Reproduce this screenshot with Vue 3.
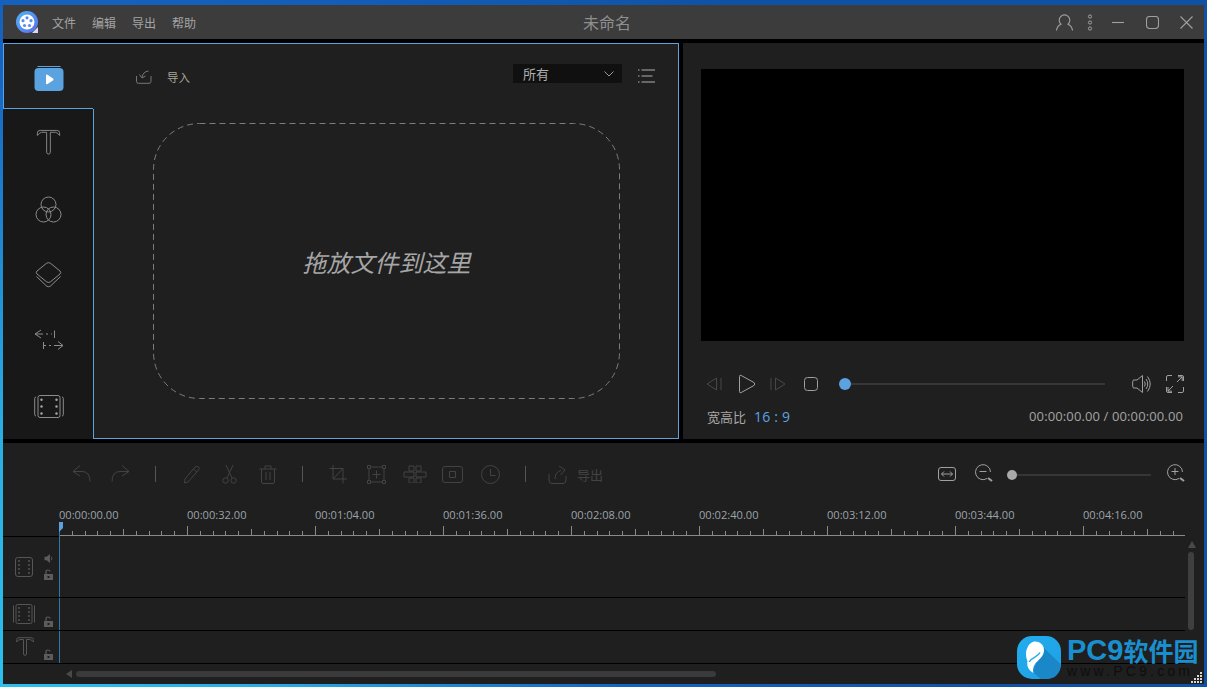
<script setup>
const menus = ['文件', '编辑', '导出', '帮助']

const toolbar = [
  { gap: 69, w: 20, h: 20, d: 'M8 1.5 L1 7.5 L8 12 M1 7.5 H10 Q18 7.5 18 17.5' },
  { gap: 18, w: 20, h: 20, d: 'M12 1.5 L19 7.5 L12 12 M19 7.5 H10 Q2 7.5 2 17.5' },
  { gap: 25, sep: true },
  { gap: 27, w: 17, h: 20, d: 'M2 15 L12 3 Q14 1.5 15.5 3 Q17 4.5 15.5 6 L5 18 L1.5 19 Z M10.5 5 L14 8' },
  { gap: 22, w: 15, h: 20, d: 'M5 14 L11 1 M10 14 L4 1 M6.2 16.5 A2.7 2.7 0 1 1 0.8 16.5 A2.7 2.7 0 1 1 6.2 16.5 M14.2 16.5 A2.7 2.7 0 1 1 8.8 16.5 A2.7 2.7 0 1 1 14.2 16.5' },
  { gap: 22, w: 18, h: 20, d: 'M0.5 5 H17.5 M6 5 V2 H12 V5 M2.5 5 V18 Q2.5 19.5 4 19.5 H14 Q15.5 19.5 15.5 18 V5 M7 8 V16 M11 8 V16' },
  { gap: 25, sep: true },
  { gap: 26, w: 18, h: 20, d: 'M4 1 V15 H18 M0.5 4.5 H14 V19.5 M4 15 L14 4.5' },
  { gap: 20, w: 19, h: 19, d: 'M4 2 H15 M4 17 H15 M2 4 V15 M17 4 V15 M0.5 0.5 H3.5 V3.5 H0.5 Z M15.5 0.5 H18.5 V3.5 H15.5 Z M0.5 15.5 H3.5 V18.5 H0.5 Z M15.5 15.5 H18.5 V18.5 H15.5 Z M9.5 5.5 V13.5 M5.5 9.5 H13.5' },
  { gap: 17, w: 24, h: 18, d: 'M6 1 H11 V6 H6 Z M13 1 H18 V6 H13 Z M1 7 H11 V12 H1 Z M13 7 H23 V12 H13 Z M6 13 H11 V18 H6 Z M13 13 H18 V18 H13 Z' },
  { gap: 15, w: 21, h: 17, d: 'M3 0.5 H18 Q20.5 0.5 20.5 3 V14 Q20.5 16.5 18 16.5 H3 Q0.5 16.5 0.5 14 V3 Q0.5 0.5 3 0.5 Z M7.5 5.5 H13.5 V11.5 H7.5 Z' },
  { gap: 18, w: 19, h: 19, d: 'M18.5 9.5 A9 9 0 1 1 0.5 9.5 A9 9 0 1 1 18.5 9.5 M9.5 4 V10.5 H14.5' },
  { gap: 25, sep: true },
  { gap: 22, w: 19, h: 19, d: 'M1 9 V15 Q1 18.5 4 18.5 H15 Q18 18.5 18 15 V11 M7 14 Q7 7 13 5.5 M11 1 L17 5 L12.5 10' },
]

const rulerLabels = ['00:00:00.00', '00:00:32.00', '00:01:04.00', '00:01:36.00', '00:02:08.00', '00:02:40.00', '00:03:12.00', '00:03:44.00', '00:04:16.00']

const tickPath = Array.from({ length: 88 }, (_, i) => {
  const x = 56.5 + Math.round(i * 12.8)
  const top = i % 10 === 0 ? 1 : i % 5 === 0 ? 4 : 6
  return `M${x} ${top} V10`
}).join(' ')

const gripDots = [[9, 0], [6, 3], [9, 3], [3, 6], [6, 6], [9, 6], [0, 9], [3, 9], [6, 9], [9, 9]]
</script>

<template>
  <div class="app">
    <header class="titlebar">
      <div class="title-left">
        <svg class="logo" width="22" height="22" viewBox="0 0 22 22">
          <defs>
            <linearGradient id="lg" x1="0" y1="0" x2="1" y2="1">
              <stop offset="0" stop-color="#52b4f2" />
              <stop offset="1" stop-color="#5a6cf0" />
            </linearGradient>
          </defs>
          <circle cx="11" cy="11" r="11" fill="url(#lg)" />
          <path d="M16 22 L22 16 V22 Z" fill="#d8d8f4" />
          <circle cx="11" cy="11" r="7.5" fill="#fff" />
          <circle cx="11" cy="6.8" r="1.6" fill="#5a8eee" />
          <circle cx="15" cy="9.7" r="1.6" fill="#5a8eee" />
          <circle cx="13.5" cy="14.5" r="1.6" fill="#5a8eee" />
          <circle cx="8.5" cy="14.5" r="1.6" fill="#5a8eee" />
          <circle cx="7" cy="9.7" r="1.6" fill="#5a8eee" />
        </svg>
        <nav class="menu">
          <span v-for="m in menus" :key="m">{{ m }}</span>
        </nav>
      </div>
      <div class="title">未命名</div>
      <div class="title-right">
        <svg class="ic-title" width="17" height="17" viewBox="0 0 17 17"><path d="M0.5 16.5 Q1 12 5 10.2 A5.3 5.3 0 1 1 12 10.2 Q16 12 16.5 16.5" /></svg>
        <svg class="ic-title dots" width="6" height="17" viewBox="0 0 6 17"><circle cx="3" cy="2.5" r="1.6" /><circle cx="3" cy="8.5" r="1.6" /><circle cx="3" cy="14.5" r="1.6" /></svg>
        <svg class="ic-title min" width="12" height="3" viewBox="0 0 12 3"><path d="M0 1.5 H12" /></svg>
        <svg class="ic-title max" width="13" height="13" viewBox="0 0 13 13"><rect x="0.5" y="0.5" width="12" height="12" rx="3" /></svg>
        <svg class="ic-title close" width="13" height="13" viewBox="0 0 13 13"><path d="M0.5 0.5 L12.5 12.5 M12.5 0.5 L0.5 12.5" /></svg>
      </div>
    </header>

    <main class="main">
      <section class="library">
        <aside class="side">
          <div class="tab-active">
            <svg width="30" height="25" viewBox="0 0 30 25">
              <path d="M3.5 0.5 H26.5" stroke="#5ba3e0" fill="none" />
              <rect x="0.5" y="2" width="29" height="23" rx="4" fill="#5ba3e0" />
              <path d="M12 9.5 Q12 8 13.5 8.8 L19 12.5 Q20 13.5 19 14.5 L13.5 18 Q12 18.8 12 17.5 Z" fill="#fff" />
            </svg>
          </div>
          <div class="side-rest">
            <div class="side-item item-text">
              <svg class="ic-side" width="25" height="26" viewBox="0 0 27 28"><path d="M1.5 7 V4 Q1.5 1.5 4.5 1.5 H22.5 Q25.5 1.5 25.5 4 V7 Q23.5 4 21 3.5 H15.5 V25 Q15.5 27 13.5 27 Q11.5 27 11.5 25 V3.5 H6 Q3.5 4 1.5 7 Z" /></svg>
            </div>
            <div class="side-item">
              <svg class="ic-side" width="27" height="27" viewBox="0 0 27 27"><circle cx="13.5" cy="8.5" r="7.5" /><circle cx="8.5" cy="18.5" r="7.5" /><circle cx="18.5" cy="18.5" r="7.5" /></svg>
            </div>
            <div class="side-item">
              <svg class="ic-side" width="27" height="26" viewBox="0 0 27 26"><path d="M11.5 1.3 Q13.5 0 15.5 1.3 L25 9 Q26.5 10.5 25 12 L15.5 19.8 Q13.5 21.2 11.5 19.8 L2 12 Q0.5 10.5 2 9 Z M1.5 14.5 L11.5 24 Q13.5 25.5 15.5 24 L25.5 14.5" /></svg>
            </div>
            <div class="side-item">
              <svg class="ic-side" width="31" height="24" viewBox="0 0 31 24"><path d="M2 6 H10 M8 2 L2 6 L8 10 M13 6 H15 M18 6 H19 M21.5 2.5 V10 M10.5 14 V21 M10.5 17.5 H13 M16 17.5 H18 M21 17.5 H30 M25 13.5 L30 17.5 L25 21.5" /></svg>
            </div>
            <div class="side-item">
              <svg class="ic-side" width="30" height="24" viewBox="0 0 30 24">
                <path d="M6 1.5 H24 Q26 1.5 26 3.5 V21.5 Q26 23.5 24 23.5 H6 Q4 23.5 4 21.5 V3.5 Q4 1.5 6 1.5 Z M2 3 Q0.7 3 0.7 4.5 V20.5 Q0.7 22 2 22 M28 3 Q29.3 3 29.3 4.5 V20.5 Q29.3 22 28 22" />
                <g class="fill-dots"><circle cx="7.5" cy="5.8" r="1.2" /><circle cx="22.5" cy="5.8" r="1.2" /><circle cx="7.5" cy="12.5" r="1.2" /><circle cx="22.5" cy="12.5" r="1.2" /><circle cx="7.5" cy="19.5" r="1.2" /><circle cx="22.5" cy="19.5" r="1.2" /></g>
              </svg>
            </div>
          </div>
        </aside>

        <div class="content">
          <div class="content-head">
            <div class="import">
              <svg class="ic-import" width="16" height="14" viewBox="0 0 16 14"><path d="M0.5 6 V11.5 Q0.5 13.3 2.5 13.3 H13 Q15 13.3 15 11.5 V6 M12.5 1 Q7 1.5 6 7.5 M3.5 4.5 L6 8 L9.5 6" /></svg>
              <span>导入</span>
            </div>
            <div class="select">
              <span>所有</span>
              <svg width="10" height="6" viewBox="0 0 10 6"><path d="M0.5 0.5 L5 5 L9.5 0.5" /></svg>
            </div>
            <svg class="ic-list" width="17" height="14" viewBox="0 0 17 14"><path d="M0 1 H1.5 M3.5 1 H17 M0 7 H1.5 M3.5 7 H14.5 M0 13 H1.5 M3.5 13 H17" /></svg>
          </div>
          <div class="drop">
            <svg class="drop-line" width="467" height="276" viewBox="0 0 467 276"><rect x="0.5" y="0.5" width="466" height="275" rx="46" /></svg>
            <span>拖放文件到这里</span>
          </div>
        </div>
      </section>

      <section class="preview">
        <div class="video"></div>
        <div class="controls">
          <svg class="ic-dim" width="16" height="16" viewBox="0 0 16 16"><path d="M10.5 2 L1 8 L10.5 14 Z M15 2 V14" /></svg>
          <svg class="ic-ctl play" width="18" height="20" viewBox="0 0 18 20"><path d="M1.5 2.5 Q1.5 0.6 3.2 1.5 L16 8.5 Q17.5 10 16 11.5 L3.2 18.5 Q1.5 19.4 1.5 17.5 Z" /></svg>
          <svg class="ic-dim next" width="16" height="16" viewBox="0 0 16 16"><path d="M5.5 2 L15 8 L5.5 14 Z M1 2 V14" /></svg>
          <svg class="ic-ctl stop" width="14" height="14" viewBox="0 0 14 14"><rect x="0.5" y="0.5" width="13" height="13" rx="3" /></svg>
          <div class="progress"><i class="knob"></i></div>
          <svg class="ic-ctl" width="21" height="20" viewBox="0 0 21 20"><path d="M5 6 H2 Q0.7 6 0.7 7.5 V12.5 Q0.7 14 2 14 H5 L10.5 18.5 V1.5 Z M12.5 7.5 Q14 10 12.5 12.5 M14 5 Q17.5 10 14 15 M15.5 2.5 Q21 10 15.5 17.5" /></svg>
          <svg class="ic-ctl full" width="18" height="18" viewBox="0 0 18 18"><path d="M0.5 6 V2 Q0.5 0.5 2 0.5 H6 M12 0.5 H16 Q17.5 0.5 17.5 2 V6 M17.5 12 V16 Q17.5 17.5 16 17.5 H12 M6 17.5 H2 Q0.5 17.5 0.5 16 V12 M11 7 L16 2 M12 1.8 H16.2 V6 M7 11 L2 16 M2 12 V16.2 H6" /></svg>
        </div>
        <div class="info">
          <span class="ratio-label">宽高比</span>
          <span class="ratio">16 : 9</span>
          <span class="time">00:00:00.00 / 00:00:00.00</span>
        </div>
      </section>
    </main>

    <section class="timeline">
      <div class="toolbar">
        <template v-for="(t, i) in toolbar" :key="i">
          <i v-if="t.sep" class="sep" :style="{ marginLeft: t.gap + 'px' }"></i>
          <svg v-else class="ic-tool" :width="t.w" :height="t.h" :viewBox="`0 0 ${t.w} ${t.h}`" :style="{ marginLeft: t.gap + 'px' }"><path :d="t.d" /></svg>
        </template>
        <span class="tool-text">导出</span>
        <div class="zoom">
          <svg class="ic-ctl" width="18" height="14" viewBox="0 0 18 14"><path d="M3 0.5 H15 Q17.5 0.5 17.5 3 V11 Q17.5 13.5 15 13.5 H3 Q0.5 13.5 0.5 11 V3 Q0.5 0.5 3 0.5 Z M3.5 7 H14.5 M6 4.5 L3.5 7 L6 9.5 M12 4.5 L14.5 7 L12 9.5" /></svg>
          <svg class="ic-ctl z-minus" width="18" height="18" viewBox="0 0 18 18"><path d="M15.5 8 A7.5 7.5 0 1 0 12 14.5 M4.5 7.5 H11.5" /><path class="thick" d="M13 14 L17 17" /></svg>
          <div class="zoom-track"><i class="zoom-knob"></i></div>
          <svg class="ic-ctl z-plus" width="18" height="18" viewBox="0 0 18 18"><path d="M15.5 8 A7.5 7.5 0 1 0 12 14.5 M4.5 7.5 H11.5 M8 4 V11" /><path class="thick" d="M13 14 L17 17" /></svg>
        </div>
      </div>

      <div class="ruler-labels">
        <span v-for="l in rulerLabels" :key="l">{{ l }}</span>
      </div>
      <svg class="ruler" width="1201" height="12" viewBox="0 0 1201 12">
        <path :d="tickPath" stroke="#8a8a8a" fill="none" />
        <path d="M56 10.5 H1182" stroke="#8a8a8a" fill="none" />
        <path d="M0 11.5 H56" stroke="#000" fill="none" />
      </svg>

      <div class="tracks">
        <i class="playhead"></i>
        <i class="playhead-cap"></i>
        <div class="rows">
          <div class="row row-video">
            <svg class="ic-track" width="18" height="20" viewBox="0 0 18 20"><path d="M2.5 0.5 H15 Q17.5 0.5 17.5 3 V17 Q17.5 19.5 15 19.5 H3 Q0.5 19.5 0.5 17 V3 Q0.5 0.5 2.5 0.5 Z" /><g class="track-dots"><circle cx="4" cy="4" r="1" /><circle cx="14" cy="4" r="1" /><circle cx="4" cy="8" r="1" /><circle cx="14" cy="8" r="1" /><circle cx="4" cy="12" r="1" /><circle cx="14" cy="12" r="1" /><circle cx="4" cy="16" r="1" /><circle cx="14" cy="16" r="1" /></g></svg>
            <div class="track-tools">
              <svg width="10" height="9" viewBox="0 0 10 10"><path class="solid" d="M0 3 H2.5 L6 0 V10 L2.5 7 H0 Z" /><path d="M7.5 3 Q9 5 7.5 7" stroke="#5c5c5c" fill="none" /></svg>
              <svg width="9" height="11" viewBox="0 0 9 11"><path d="M2 5 V3 Q2 1 4 1 Q6 1 6 2.5" stroke="#5c5c5c" stroke-width="1.2" fill="none" /><path class="solid" fill-rule="evenodd" d="M0 5 H9 V11 H0 Z M3.5 7 V9 H5.5 V7 Z" /></svg>
            </div>
          </div>
          <div class="row row-small">
            <svg class="ic-track wide" width="22" height="20" viewBox="0 0 22 20"><path d="M4.5 0.5 H17.5 Q19 0.5 19 2 V18 Q19 19.5 17.5 19.5 H4.5 Q3 19.5 3 18 V2 Q3 0.5 4.5 0.5 Z M0.5 1.5 V18.5 M21.5 1.5 V18.5" /><g class="track-dots"><circle cx="6" cy="4" r="1" /><circle cx="16" cy="4" r="1" /><circle cx="6" cy="8" r="1" /><circle cx="16" cy="8" r="1" /><circle cx="6" cy="12" r="1" /><circle cx="16" cy="12" r="1" /><circle cx="6" cy="16" r="1" /><circle cx="16" cy="16" r="1" /></g></svg>
            <svg class="lock" width="9" height="11" viewBox="0 0 9 11"><path d="M2 5 V3 Q2 1 4 1 Q6 1 6 2.5" stroke="#5c5c5c" stroke-width="1.2" fill="none" /><path class="solid" fill-rule="evenodd" d="M0 5 H9 V11 H0 Z M3.5 7 V9 H5.5 V7 Z" /></svg>
          </div>
          <div class="row row-small">
            <svg class="ic-track text" width="18" height="19" viewBox="0 0 18 19"><path d="M0.7 5 V2.5 Q0.7 0.7 3 0.7 H15 Q17.3 0.7 17.3 2.5 V5 Q16 3 14 2.5 H10.5 V17 Q10.5 18.3 9 18.3 Q7.5 18.3 7.5 17 V2.5 H4 Q2 3 0.7 5 Z" /></svg>
            <svg class="lock" width="9" height="11" viewBox="0 0 9 11"><path d="M2 5 V3 Q2 1 4 1 Q6 1 6 2.5" stroke="#5c5c5c" stroke-width="1.2" fill="none" /><path class="solid" fill-rule="evenodd" d="M0 5 H9 V11 H0 Z M3.5 7 V9 H5.5 V7 Z" /></svg>
          </div>
        </div>
        <div class="vscroll">
          <i class="arrow-up"></i>
          <i class="vthumb"></i>
        </div>
      </div>

      <div class="hscroll">
        <i class="arrow-left"></i>
        <i class="hthumb"></i>
      </div>
    </section>

    <div class="watermark">
      <svg width="44" height="43" viewBox="0 0 44 43">
        <defs>
          <linearGradient id="wm" x1="0" y1="0" x2="1" y2="1">
            <stop offset="0" stop-color="#22acee" />
            <stop offset="1" stop-color="#1ea0e4" />
          </linearGradient>
        </defs>
        <rect width="44" height="43" rx="15" fill="url(#wm)" />
        <path d="M26 11 L43.5 28 Q43 43 29 43 H24 L15.5 36 Z" fill="#1a88c8" />
        <path d="M18 5.5 C24 5.5 27.5 10 27 15 C26.5 21 21 24 18 28 C16 31 15.5 34 16.5 37 C11 34 9.5 29 10.5 25 C8.5 21 8.5 15 10.5 11.5 C12 8 15 5.5 18 5.5 Z" fill="#fff" />
        <path d="M12 26 C15 21 21 21 23 16.5" fill="none" stroke="#22acee" stroke-width="1.4" />
      </svg>
      <div class="wm-text">
        <div class="wm-name">PC9<span>软件园</span></div>
        <div class="wm-url">www.PC9.com</div>
      </div>
    </div>
    <svg class="grip" width="11" height="11" viewBox="0 0 11 11">
      <rect v-for="(d, i) in gripDots" :key="i" :x="d[0]" :y="d[1]" width="2" height="2" fill="#d8d8d8" />
    </svg>
  </div>
</template>

<style>
html, body { margin: 0; background: #1565bf; overflow: hidden; }
</style>

<style scoped>
.app {
  position: relative;
  width: 1207px;
  height: 687px;
  box-sizing: border-box;
  padding: 5px 3px 3px;
  display: flex;
  flex-direction: column;
  background: radial-gradient(circle at 0 100%, #2bc0ee 0, #29aee4 260px, #1664c2 620px, #0e52a6 1000px);
  font-family: "Open Sans", "Noto Sans CJK SC", sans-serif;
  color: #a8a8a8;
}
svg { display: block; flex: none; }
i { display: block; }

.titlebar {
  height: 34px;
  background: #3c3c3c;
  display: grid;
  grid-template-columns: 1fr auto 1fr;
  align-items: center;
}
.title-left { display: flex; align-items: center; padding-left: 13px; }
.menu { display: flex; gap: 16px; margin-left: 14px; font-size: 12px; color: #a4a4a4; font-family: "Noto Sans CJK SC", sans-serif; }
.title { font-size: 16px; color: #8f8f8f; margin-left: 7px; font-family: "Noto Sans CJK SC", sans-serif; }
.title-right { display: flex; align-items: center; justify-content: flex-end; }
.ic-title { fill: none; stroke: #a0a0a0; stroke-width: 1.1; }
.dots { margin-left: 14px; stroke-width: 1; }
.min { margin-left: 19px; }
.max { margin-left: 22px; }
.close { margin-left: 21px; margin-right: 11px; }

.main { display: flex; gap: 4px; height: 404px; box-sizing: border-box; padding: 4px 0; background: #000; }

.library { width: 676px; flex: none; display: flex; box-sizing: border-box; border-top: 1px solid #5ba3e0; background: #1f1f1f; }
.side { width: 90px; display: flex; flex-direction: column; }
.tab-active {
  height: 65px;
  box-sizing: border-box;
  border-left: 1px solid #5ba3e0;
  border-bottom: 1px solid #5ba3e0;
  display: flex;
  justify-content: center;
  align-items: flex-start;
  padding-top: 22px;
  padding-left: 1px;
}
.side-rest {
  flex: 1;
  background: #181818;
  border-right: 1px solid #5ba3e0;
  display: flex;
  flex-direction: column;
  margin-right: -1px;
  padding-top: 2px;
}
.side-item { height: 65.5px; display: flex; align-items: center; justify-content: center; padding-left: 1px; }
.item-text svg { margin-bottom: 3px; }
.ic-side { fill: none; stroke: #8c8c8c; stroke-width: 1; }
.fill-dots { fill: #a8a8a8; stroke: none; }

.content { flex: 1; box-sizing: border-box; border-right: 1px solid #5ba3e0; border-bottom: 1px solid #5ba3e0; margin-left: 1px; }
.content-head { height: 79px; display: flex; align-items: flex-start; padding: 20px 23px 0 42px; box-sizing: border-box; }
.import { display: flex; align-items: center; gap: 15px; margin-top: 3px; font-size: 11.5px; color: #aaa598; font-family: "Noto Sans CJK SC", sans-serif; height: 19px; }
.ic-import { fill: none; stroke: #777; stroke-width: 1; }
.select {
  margin-left: auto;
  width: 109px;
  height: 19px;
  box-sizing: border-box;
  padding: 0 8px 0 10px;
  background: #101010;
  display: flex;
  align-items: center;
  justify-content: space-between;
  font-size: 13px;
  color: #b0b0b0;
  font-family: "Noto Sans CJK SC", sans-serif;
}
.select svg { fill: none; stroke: #999; }
.ic-list { margin-left: 16px; margin-top: 5px; fill: none; stroke: #b0b0b0; stroke-width: 1; }
.drop {
  position: relative;
  margin-left: 59px;
  width: 467px;
  height: 276px;
  display: flex;
  align-items: center;
  justify-content: center;
  font-size: 24px;
  font-style: italic;
  color: #a6a6a6;
  font-family: "Noto Sans CJK SC", sans-serif;
}
.drop-line { position: absolute; left: 0; top: 0; fill: none; stroke: #7c7c7c; stroke-dasharray: 6 4; }

.preview { flex: 1; min-width: 0; background: #1f1f1f; padding: 26px 20px 0 18px; }
.video { height: 272px; background: #000; }
.controls { display: flex; align-items: center; height: 20px; margin-top: 33px; padding-left: 5px; }
.ic-dim { fill: none; stroke: #474747; stroke-width: 1; }
.ic-ctl { fill: none; stroke: #a0a0a0; stroke-width: 1; }
.thick { stroke-width: 2; }
.play { margin-left: 16px; }
.next { margin-left: 14px; }
.stop { margin-left: 18px; }
.progress { position: relative; width: 260px; height: 2px; background: #363636; margin: 0 27px; }
.knob { position: absolute; left: -6px; top: -5px; width: 12px; height: 12px; border-radius: 50%; background: #5ba3e0; }
.full { margin-left: 13px; }
.info { display: flex; align-items: center; height: 20px; margin-top: 12px; padding: 0 1px 0 6px; }
.ratio-label { font-size: 13px; color: #a8a8a8; font-family: "Noto Sans CJK SC", sans-serif; }
.ratio { font-size: 14px; color: #5ba3e0; margin-left: 8px; letter-spacing: 0.2px; }
.time { margin-left: auto; font-size: 13px; color: #a4a4a4; letter-spacing: 0.12px; }

.timeline { flex: 1; background: #1f1f1f; display: flex; flex-direction: column; }
.toolbar { height: 62px; display: flex; align-items: center; flex: none; }
.ic-tool { fill: none; stroke: #434343; stroke-width: 1; }
.sep { width: 1px; height: 16px; background: #555; }
.tool-text { margin-left: 10px; font-size: 13px; color: #434343; font-family: "Noto Sans CJK SC", sans-serif; }
.zoom { margin-left: auto; display: flex; align-items: center; padding-right: 19px; }
.z-minus { margin-left: 19px; margin-top: -2px; }
.zoom-track { position: relative; width: 139px; height: 2px; background: #363636; margin: 2px 0 0 19px; }
.zoom-knob { position: absolute; left: -5px; top: -4px; width: 10px; height: 10px; border-radius: 50%; background: #aaa; }
.z-plus { margin-left: 16px; margin-top: -2px; }

.ruler-labels { height: 20px; box-sizing: border-box; padding: 0 0 2px 56px; display: flex; align-items: center; flex: none; font-size: 11.1px; color: #9aa4aa; }
.ruler-labels span { width: 128px; flex: none; }
.ruler { flex: none; }

.tracks { position: relative; display: flex; height: 127px; flex: none; }
.playhead { position: absolute; left: 56px; top: -11px; bottom: 0; width: 1px; background: #2a7ca8; }
.playhead-cap { position: absolute; left: 56px; top: -15px; width: 4px; height: 10px; background: #5ba3e0; clip-path: polygon(0 0, 100% 0, 100% 60%, 0 100%); }
.rows { width: 1182px; display: flex; flex-direction: column; }
.row { box-sizing: border-box; border-bottom: 1px solid #000; position: relative; display: flex; }
.row-video { height: 61px; padding: 20px 0 0 12px; }
.row-small { height: 33px; padding: 6px 0 0 10px; }
.ic-track { fill: none; stroke: #555; stroke-width: 1; }
.track-dots { fill: #555; stroke: none; }
.track-tools { margin: -3px 0 0 11px; display: flex; flex-direction: column; gap: 6px; align-items: flex-start; }
.solid { fill: #5c5c5c; }
.row-small .text { margin-left: 3px; margin-right: 10px; }
.row-small .wide { margin-right: 9px; }
.lock { margin-top: 12px; }
.vscroll { flex: 1; padding: 4px 0 0 3px; display: flex; flex-direction: column; }
.arrow-up { width: 0; height: 0; border: 4px solid transparent; border-top: 0; border-bottom: 7px solid #4a4a4a; }
.vthumb { width: 6px; height: 78px; margin-top: 4px; border-radius: 3px; background: #3f3f3f; }

.hscroll { flex: 1; display: flex; align-items: center; padding-left: 63px; }
.arrow-left { width: 0; height: 0; border: 4px solid transparent; border-left: 0; border-right: 6px solid #4a4a4a; }
.hthumb { width: 640px; height: 6px; margin-left: 4px; border-radius: 3px; background: #3a3a3a; }

.watermark { position: absolute; left: 1017px; top: 636px; display: flex; gap: 6px; }
.wm-text { width: 136px; }
.wm-name { height: 28px; font-size: 29px; line-height: 28px; font-weight: 700; color: #1a8fd0; white-space: nowrap; font-family: "Liberation Sans", sans-serif; display: flex; align-items: center; }
.wm-name span { font-size: 25px; line-height: 28px; font-family: "Noto Sans CJK SC", sans-serif; }
.wm-url { font-size: 14px; line-height: 14px; letter-spacing: 3.2px; color: #0e0e0e; white-space: nowrap; font-family: "Liberation Sans", sans-serif; }
.grip { position: absolute; left: 1191px; top: 672px; }
</style>
